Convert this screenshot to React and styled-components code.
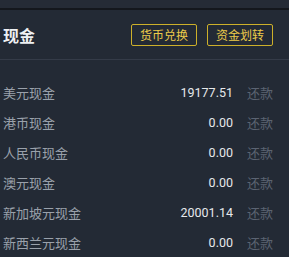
import React from "react";
import styled, { createGlobalStyle } from "styled-components";

const Global = createGlobalStyle`
  html, body { margin: 0; padding: 0; background: #232a35; }
  body { font-family: "Noto Sans CJK SC", "Noto Sans", sans-serif; }
`;

const Page = styled.div`
  width: 289px;
  height: 257px;
  background: #232a35;
  display: flex;
  flex-direction: column;
  overflow: hidden;
`;

const TopStrip = styled.div`
  height: 8px;
  background: #252b36;
`;

const Divider = styled.div`
  height: 3px;
  background: #14171d;
`;

const Header = styled.div`
  height: 50px;
  padding: 1px 16px 0 3px;
  display: flex;
  align-items: center;
  justify-content: space-between;
  border-bottom: 1px solid #343b48;
`;

const Title = styled.div`
  color: #eef0f3;
  font-size: 16px;
  font-weight: 700;
`;

const Actions = styled.div`
  display: flex;
  gap: 10px;
`;

const ActionButton = styled.div`
  height: 20px;
  padding: 0 8px;
  border: 1px solid #cdb02a;
  border-radius: 2px;
  color: #eccb4a;
  font-size: 12px;
  display: flex;
  align-items: center;
  line-height: 1;
`;

const List = styled.div`
  display: flex;
  flex-direction: column;
  padding-top: 17px;
`;

const Row = styled.div`
  height: 30px;
  display: flex;
  align-items: center;
  padding: 0 16px 0 3px;
  font-size: 13px;
`;

const Label = styled.div`
  flex: 1;
  color: #9aa1ab;
`;

const Amount = styled.div`
  color: #e6e8eb;
  font-family: Roboto, "Noto Sans", sans-serif;
  font-size: 12.5px;
`;

const Repay = styled.div`
  color: #5b6371;
  margin-left: 14px;
`;

const rows = [
  ["美元现金", "19177.51"],
  ["港币现金", "0.00"],
  ["人民币现金", "0.00"],
  ["澳元现金", "0.00"],
  ["新加坡元现金", "20001.14"],
  ["新西兰元现金", "0.00"],
];

export default function App() {
  return (
    <Page>
      <Global />
      <TopStrip />
      <Divider />
      <Header>
        <Title>现金</Title>
        <Actions>
          <ActionButton>货币兑换</ActionButton>
          <ActionButton>资金划转</ActionButton>
        </Actions>
      </Header>
      <List>
        {rows.map(([l, v]) => (
          <Row key={l}>
            <Label>{l}</Label>
            <Amount>{v}</Amount>
            <Repay>还款</Repay>
          </Row>
        ))}
      </List>
    </Page>
  );
}
